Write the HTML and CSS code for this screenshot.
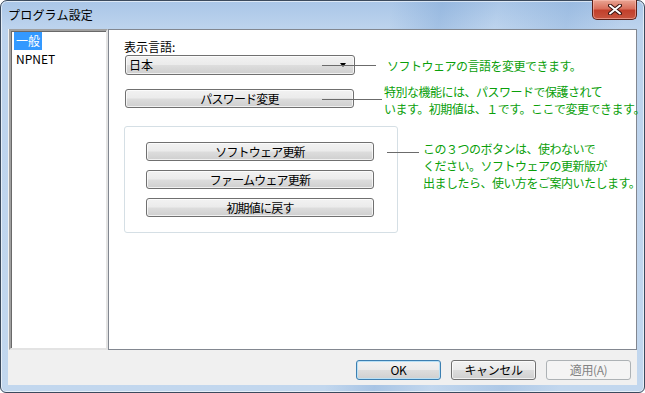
FILE: index.html
```html
<!DOCTYPE html>
<html lang="ja">
<head>
  <meta charset="UTF-8" />
  <title>プログラム設定</title>
  <link rel="stylesheet" href="styles.css">
</head>
<body>
  <div class="window">
    <div class="titlebar">
      <span class="title">プログラム設定</span>
      <div class="close">
        <svg width="14" height="11" viewBox="0 0 14 11">
          <path d="M2 1.5 L12 9.5 M12 1.5 L2 9.5" stroke="#3a1410" stroke-width="4" stroke-linecap="round"/>
          <path d="M2 1.5 L12 9.5 M12 1.5 L2 9.5" stroke="#fff" stroke-width="2" stroke-linecap="round"/>
        </svg>
      </div>
    </div>
    <div class="client">
      <div class="main">
        <div class="tree">
          <div class="item selected">一般</div>
          <div class="item">NPNET</div>
        </div>
        <div class="panel">
          <div class="label">表示言語:</div>
          <div class="row">
            <div class="btn combo">
              <span>日本</span>
              <span class="arrow"></span>
            </div>
            <div class="note note-lang">ソフトウェアの言語を変更できます。</div>
          </div>
          <div class="row row-top">
            <div class="btn wide">パスワード変更</div>
            <div class="note note-pass">特別な機能には、パスワードで保護されて<br>います。初期値は、１です。ここで変更できます。</div>
          </div>
          <div class="row row-top">
            <div class="group">
              <div class="btn inner">ソフトウェア更新</div>
              <div class="btn inner">ファームウェア更新</div>
              <div class="btn inner">初期値に戻す</div>
            </div>
            <div class="note note-group">この３つのボタンは、使わないで<br>ください。ソフトウェアの更新版が<br>出ましたら、使い方をご案内いたします。</div>
          </div>
        </div>
      </div>
      <div class="footer">
        <div class="btn dlg focus">OK</div>
        <div class="btn dlg">キャンセル</div>
        <div class="btn dlg disabled">適用(A)</div>
      </div>
    </div>
  </div>
</body>
</html>
```

FILE: styles.css
```css
* { box-sizing: border-box; }
body {
  margin: 0;
  font-family: "Noto Sans CJK JP", "Liberation Sans", sans-serif;
  font-size: 12px;
  color: #000;
  background: #fff;
}
.window {
  width: 645px;
  height: 393px;
  border: 1px solid #3b4a5d;
  border-radius: 7px 7px 6px 6px;
  padding: 0 7px 7px 7px;
  background:
    linear-gradient(100deg, rgba(255,255,255,0) 55%, rgba(90,140,200,0.25) 62%, rgba(255,255,255,0) 70%, rgba(90,140,200,0.2) 80%, rgba(255,255,255,0) 88%),
    linear-gradient(to bottom, #a9c6e7 0, #bcd3ed 26px, #c2d7ee 100%);
  box-shadow: inset 0 0 0 1px rgba(255,255,255,0.6);
}
.titlebar {
  height: 28px;
  display: flex;
  justify-content: space-between;
  align-items: flex-start;
}
.title {
  padding-top: 6px;
  line-height: 16px;
  letter-spacing: 0.2px;
}
.close {
  margin-top: -1px;
  width: 45px;
  height: 20px;
  border: 1px solid #5b2018;
  border-top: none;
  border-radius: 0 0 5px 5px;
  background: linear-gradient(to bottom, #e9a593 0, #d9705d 45%, #c2402c 55%, #c8553f 100%);
  box-shadow: inset 0 0 0 1px rgba(255,200,190,0.5);
  display: flex;
  align-items: center;
  justify-content: center;
}
.client {
  height: 356px;
  background: #f0f0f0;
  display: flex;
  flex-direction: column;
}
.main {
  height: 321px;
  display: flex;
}
.tree {
  flex: none;
  width: 99px;
  margin-left: 1px;
  background: #fff;
  border: 2px solid;
  border-color: #a0a0a0 #e3e3e3 #e3e3e3 #a0a0a0;
  box-shadow: inset 1px 1px 0 #696969;
  padding: 1px 0 0 3px;
}
.item {
  line-height: 18px;
  padding: 0 2px;
  display: table;
}
.selected {
  background: #3399ff;
  color: #fff;
}
.panel {
  flex: 1;
  min-width: 0;
  background: #fff;
  border: 1px solid #828790;
  padding: 9px 0 0 15px;
}
.label {
  line-height: 15px;
  margin-bottom: 1px;
}
.row {
  display: flex;
  align-items: center;
}
.row-top {
  align-items: flex-start;
}
.btn {
  flex: none;
  height: 19px;
  border: 1px solid #707070;
  border-radius: 3px;
  background: linear-gradient(to bottom, #f2f2f2 0, #ebebeb 48%, #dddddd 52%, #cfcfcf 100%);
  box-shadow: inset 0 0 0 1px rgba(255,255,255,0.7);
  display: flex;
  align-items: center;
  justify-content: center;
  font-size: 12px;
  letter-spacing: -0.8px;
  line-height: 1;
  white-space: nowrap;
}
.combo {
  width: 230px;
  height: 20px;
  margin-left: 1px;
  justify-content: space-between;
  padding: 0 8px 0 3px;
  letter-spacing: 0;
}
.arrow {
  width: 0;
  height: 0;
  border-left: 3px solid transparent;
  border-right: 3px solid transparent;
  border-top: 4px solid #000;
}
.wide {
  width: 229px;
  margin-left: 1px;
  margin-top: 14px;
}
.group {
  flex: none;
  width: 274px;
  height: 107px;
  margin-top: 18px;
  border: 1px solid #d5dfe5;
  border-radius: 3px;
  padding: 15px 0 0 21px;
  display: flex;
  flex-direction: column;
  gap: 9px;
}
.inner {
  width: 228px;
}
.note {
  position: relative;
  color: #0aa00a;
  line-height: 17px;
  letter-spacing: -0.5px;
  white-space: nowrap;
}
.note::before {
  content: "";
  position: absolute;
  height: 1px;
  background: #6b6b6b;
}
.note-lang {
  margin-left: 32px;
}
.note-lang::before {
  right: calc(100% + 11px);
  width: 54px;
  top: 8px;
}
.note-pass {
  margin-left: 30px;
  margin-top: 8px;
  margin-bottom: -9px;
}
.note-pass::before {
  right: calc(100% + 2px);
  width: 60px;
  top: 16px;
}
.note-group {
  margin-left: 25px;
  margin-top: 32px;
}
.note-group::before {
  right: calc(100% + 4px);
  width: 32px;
  top: 12px;
}
.footer {
  flex: 1;
  display: flex;
  justify-content: flex-end;
  gap: 10px;
  padding: 10px 6px 0 0;
}
.dlg {
  width: 85px;
  height: 20px;
  letter-spacing: -0.4px;
}
.focus {
  border-color: #3c7fb1;
  box-shadow: inset 0 0 0 1px #b8e0f6;
}
.disabled {
  border-color: #adb2b5;
  background: #f4f4f4;
  color: #838383;
  box-shadow: none;
}
```
